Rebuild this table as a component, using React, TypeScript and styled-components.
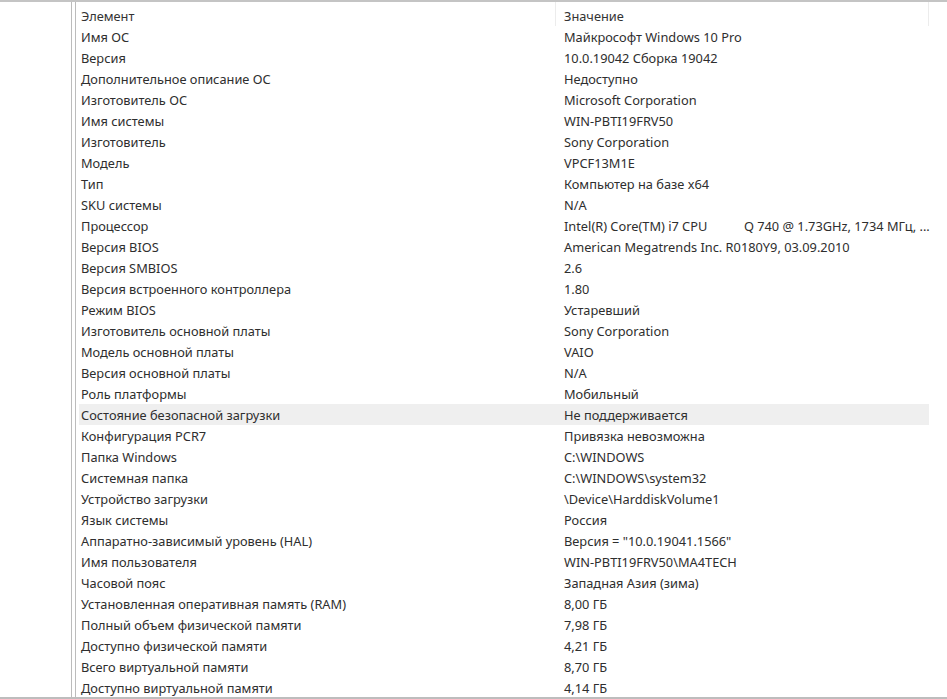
import React from "react";
import styled, { createGlobalStyle } from "styled-components";

const Global = createGlobalStyle`
  html, body { margin: 0; padding: 0; background: #ffffff; }
  body { font-family: "Noto Sans", "Open Sans", "DejaVu Sans", sans-serif; }
  * { box-sizing: border-box; }
`;

const Window = styled.div`
  display: flex;
  width: 947px;
  height: 699px;
  border-top: 2px solid #c4c4c4;
  border-bottom: 2px solid #bdbdbd;
  background: #ffffff;
  overflow: hidden;
`;

const TreePane = styled.div`
  width: 71px;
  flex: none;
`;

const Splitter = styled.div`
  width: 5px;
  flex: none;
  border-left: 1px solid #bcbcbc;
  border-right: 1px solid #bcbcbc;
`;

const ListPane = styled.div`
  flex: 1;
  padding-top: 3px;
  padding-left: 3px;
  display: flex;
  flex-direction: column;
  overflow: hidden;
`;

const Row = styled.div<{ $selected?: boolean }>`
  display: grid;
  grid-template-columns: 477px 373px;
  width: 850px;
  height: 21px;
  flex: none;
  align-items: center;
  font-size: 12.8px;
  color: #2e2e2e;
  background: ${(p) => (p.$selected ? "#efefef" : "transparent")};
`;

const HeaderCell = styled.div<{ $pad: number }>`
  height: 24px;
  display: flex;
  align-items: center;
  padding-left: ${(p) => p.$pad}px;
  border-right: 1px solid #ececec;
  color: #333333;
  white-space: nowrap;
  margin-top: -3px;
  padding-top: 3px;
`;

const Cell = styled.div<{ $pad: number }>`
  padding-left: ${(p) => p.$pad}px;
  white-space: pre;
`;

const rows: [string, string][] = [
  ["Имя ОС", "Майкрософт Windows 10 Pro"],
  ["Версия", "10.0.19042 Сборка 19042"],
  ["Дополнительное описание ОС", "Недоступно"],
  ["Изготовитель ОС", "Microsoft Corporation"],
  ["Имя системы", "WIN-PBTI19FRV50"],
  ["Изготовитель", "Sony Corporation"],
  ["Модель", "VPCF13M1E"],
  ["Тип", "Компьютер на базе x64"],
  ["SKU системы", "N/A"],
  ["Процессор", "Intel(R) Core(TM) i7 CPU           Q 740 @ 1.73GHz, 1734 МГц, ..."],
  ["Версия BIOS", "American Megatrends Inc. R0180Y9, 03.09.2010"],
  ["Версия SMBIOS", "2.6"],
  ["Версия встроенного контроллера", "1.80"],
  ["Режим BIOS", "Устаревший"],
  ["Изготовитель основной платы", "Sony Corporation"],
  ["Модель основной платы", "VAIO"],
  ["Версия основной платы", "N/A"],
  ["Роль платформы", "Мобильный"],
  ["Состояние безопасной загрузки", "Не поддерживается"],
  ["Конфигурация PCR7", "Привязка невозможна"],
  ["Папка Windows", "C:\\WINDOWS"],
  ["Системная папка", "C:\\WINDOWS\\system32"],
  ["Устройство загрузки", "\\Device\\HarddiskVolume1"],
  ["Язык системы", "Россия"],
  ["Аппаратно-зависимый уровень (HAL)", "Версия = \"10.0.19041.1566\""],
  ["Имя пользователя", "WIN-PBTI19FRV50\\MA4TECH"],
  ["Часовой пояс", "Западная Азия (зима)"],
  ["Установленная оперативная память (RAM)", "8,00 ГБ"],
  ["Полный объем физической памяти", "7,98 ГБ"],
  ["Доступно физической памяти", "4,21 ГБ"],
  ["Всего виртуальной памяти", "8,70 ГБ"],
  ["Доступно виртуальной памяти", "4,14 ГБ"],
];

export default function App() {
  return (
    <>
      <Global />
      <Window>
        <TreePane />
        <Splitter />
        <ListPane>
          <Row>
            <HeaderCell $pad={2}>Элемент</HeaderCell>
            <HeaderCell $pad={8}>Значение</HeaderCell>
          </Row>
          {rows.map(([k, v], i) => (
            <Row key={i} $selected={k === "Состояние безопасной загрузки"}>
              <Cell $pad={2}>{k}</Cell>
              <Cell $pad={8}>{v}</Cell>
            </Row>
          ))}
        </ListPane>
      </Window>
    </>
  );
}
